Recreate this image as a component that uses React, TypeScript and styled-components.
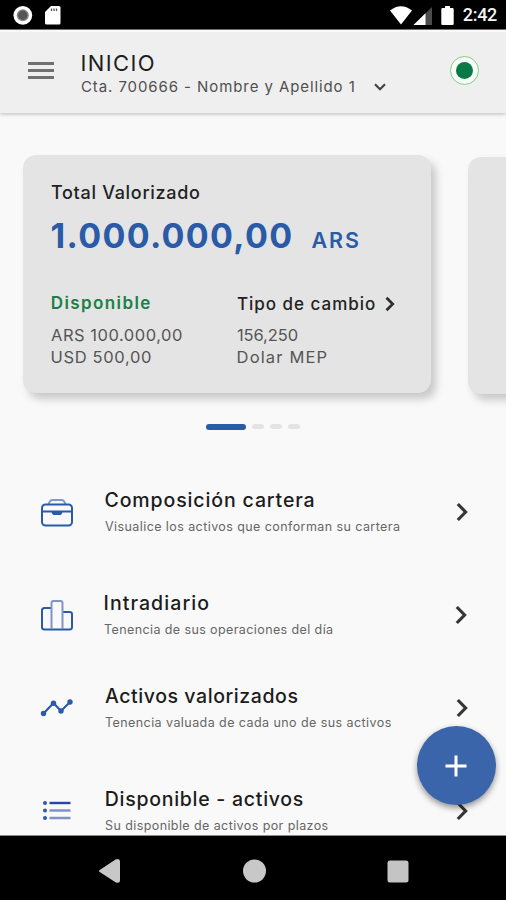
import React from "react";
import styled, { createGlobalStyle } from "styled-components";

const BLUE = "#2a5ba8";

const GlobalStyle = createGlobalStyle`
  *, *::before, *::after { box-sizing: border-box; }
  body { margin: 0; background: #fafafa; font-family: "Inter", sans-serif; }
  svg { display: block; flex: none; }
`;

const Screen = styled.div`
  position: relative;
  display: flex;
  flex-direction: column;
  width: 506px;
  height: 900px;
  overflow: hidden;
  background: #f9f9f9;
`;

const StatusBar = styled.header`
  flex: none;
  display: flex;
  align-items: center;
  justify-content: space-between;
  height: 30px;
  padding: 0 9px 0 13px;
  background: #000;
  border-bottom: 1px solid #777;
`;

const StatusGroup = styled.div<{ $gap: number }>`
  display: flex;
  align-items: center;
  gap: ${(p) => p.$gap}px;
  height: 100%;
`;

const Clock = styled.span`
  color: #f4f4f4;
  font: 500 18px/31px Roboto, sans-serif;
  letter-spacing: -0.3px;
`;

const AppBar = styled.div`
  z-index: 1;
  flex: none;
  display: flex;
  align-items: center;
  height: 83px;
  padding: 0 27px 4px 28px;
  background: #efefef;
  border-top: 2px solid #f8f8f8;
  box-shadow: 0 1px 4px rgba(0, 0, 0, 0.26);
`;

const MenuButton = styled.button`
  display: flex;
  flex-direction: column;
  gap: 4px;
  width: 26px;
  padding: 0;
  border: 0;
  background: none;
`;

const MenuLine = styled.span`
  height: 3px;
  background: #707070;
`;

const Heading = styled.div`
  flex: 1;
  margin-left: 27px;
  padding-top: 10px;
`;

interface TextProps {
  $spacing?: number;
  $shift?: number;
}

const Text = styled.div<TextProps>`
  margin-left: ${(p) => p.$shift ?? 0}px;
  letter-spacing: ${(p) => p.$spacing ?? 0}px;
  white-space: nowrap;
`;

const PageTitle = styled(Text)`
  color: #1f1f1f;
  font-size: 22px;
  line-height: 23px;
`;

const AccountRow = styled.div`
  display: flex;
  align-items: center;
  gap: 18px;
`;

const AccountName = styled(Text)`
  color: #505050;
  font-size: 15px;
  line-height: 24px;
`;

const StatusRing = styled.div`
  display: grid;
  place-items: center;
  width: 29px;
  height: 29px;
  border: 1.4px solid #7fce82;
  border-radius: 50%;
  background: #f8fbf8;

  &::before {
    content: "";
    width: 17px;
    height: 17px;
    border-radius: 50%;
    background: #077a45;
  }
`;

const Content = styled.main`
  flex: 1;
  min-height: 0;
  padding-top: 42px;
  overflow: hidden;
`;

const Carousel = styled.div`
  display: flex;
  gap: 37px;
  padding-left: 23px;
`;

const Card = styled.section<{ $next?: boolean }>`
  flex: none;
  width: 408px;
  height: ${(p) => (p.$next ? 237 : 238)}px;
  margin-top: ${(p) => (p.$next ? 2 : 0)}px;
  padding: 27px 28px 0;
  border-radius: 13px;
  background: #e4e4e4;
  box-shadow: 5px 6px 8px rgba(0, 0, 0, 0.2);
`;

const CardLabel = styled(Text)`
  color: #222;
  font-size: 18px;
  font-weight: 500;
  line-height: 22px;
`;

const AmountRow = styled.div`
  display: flex;
  align-items: baseline;
  gap: 18px;
  margin-top: 11px;
  color: ${BLUE};
`;

const Amount = styled(Text)`
  font-size: 34px;
  font-weight: 700;
  line-height: 42px;
`;

const Currency = styled(Text)`
  font-size: 21.5px;
  font-weight: 600;
`;

const CardColumns = styled.div`
  display: grid;
  grid-template-columns: 186px 1fr;
  margin-top: 34px;
`;

const ColumnTitle = styled(Text)<{ $green?: boolean }>`
  display: flex;
  align-items: center;
  gap: 9px;
  height: 24px;
  margin-top: ${(p) => (p.$green ? 0 : 1)}px;
  margin-bottom: ${(p) => (p.$green ? 9 : 8)}px;
  color: ${(p) => (p.$green ? "#1b8048" : "#222")};
  font-size: 17px;
  font-weight: ${(p) => (p.$green ? 600 : 500)};
`;

const Figure = styled(Text)`
  color: #555;
  font-size: 16.5px;
  line-height: 22px;
`;

const Pager = styled.div`
  display: flex;
  align-items: center;
  justify-content: center;
  gap: 6px;
  height: 7px;
  margin-top: 29px;
`;

const PagerDot = styled.span<{ $active?: boolean }>`
  width: ${(p) => (p.$active ? 40 : 12)}px;
  height: ${(p) => (p.$active ? 6 : 5)}px;
  border-radius: 3px;
  background: ${(p) => (p.$active ? BLUE : "#e4e4e4")};
`;

const MenuList = styled.nav`
  margin-top: 58px;
`;

const MenuItem = styled.a<{ $before: number; $inset: number }>`
  display: flex;
  height: 53px;
  margin-top: ${(p) => p.$before}px;
  padding: 0 ${(p) => 38.5 + p.$inset}px 0 40px;
`;

const IconSlot = styled.span`
  display: flex;
  align-items: center;
  width: 34px;
  height: 49px;
`;

const ItemText = styled.div<{ $inset: number }>`
  flex: 1;
  margin-left: ${(p) => 31 - p.$inset}px;
`;

const ItemTitle = styled(Text)`
  color: #1c1c1c;
  font-size: 19.5px;
  font-weight: 500;
  line-height: 24px;
`;

const ItemNote = styled(Text)`
  color: #666;
  font-size: 12.5px;
  line-height: 29px;
`;

const Fab = styled.button`
  position: absolute;
  right: 10.5px;
  bottom: 95px;
  display: grid;
  place-items: center;
  width: 79px;
  height: 79px;
  padding: 0 1px 0 0;
  border: 0;
  border-radius: 50%;
  background: #3b65aa;
  box-shadow: 0 3px 6px rgba(0, 0, 0, 0.42);
`;

const NavBar = styled.footer`
  flex: none;
  display: flex;
  align-items: center;
  justify-content: space-between;
  height: 65px;
  padding: 6px 97px 0 98px;
  border-top: 1px solid #8a8a8a;
  background: #000;
`;

const Chevron = () => (
  <svg width="12" height="49" viewBox="0 0 12 49" fill="none" stroke="#363636" strokeWidth="3.2">
    <path d="M1.800 16 9.600 24 1.800 32" />
  </svg>
);

const SmallChevron = () => (
  <svg width="10" height="16" viewBox="0 0 10 16" fill="none" stroke="#2d2d2d" strokeWidth="2.7">
    <path d="M1.500 1.800 7.700 8 1.500 14.200" />
  </svg>
);

const icons = {
  briefcase: (
    <svg width="34" height="30" viewBox="0 0 34 30" fill="none" stroke={BLUE} strokeWidth="2">
      <path d="M8.500 6.500C9.500 3 10.500 2 12.500 2h9c2 0 3 1 4 4.500" stroke="#7f97c9" />
      <rect x="2" y="6.500" width="30" height="21" rx="3.500" />
      <path d="M2 13.500h30" />
      <path d="M11.500 14c.7 2.500 1.500 3 3 3h5c1.500 0 2.300-.5 3-3z" fill={BLUE} stroke="none" />
    </svg>
  ),
  bars: (
    <svg width="34" height="32" viewBox="0 0 34 32" fill="none" strokeWidth="2">
      <path d="M11.500 9H4.500Q2 9 2 11.500V28q0 2.500 2.500 2.500h25q2.500 0 2.500-2.500V15q0-2-2.500-2h-7" stroke={BLUE} />
      <path d="M11.500 30V4q0-2 2-2h7q2 0 2 2v26" stroke="#8093c6" />
    </svg>
  ),
  trend: (
    <svg width="34" height="20" viewBox="0 0 34 20" fill={BLUE} stroke={BLUE}>
      <path d="M3.500 15.500 13.500 5l7.500 8L30 4" fill="none" strokeWidth="2.200" />
      <g stroke="none">
        <circle cx="3.500" cy="15.500" r="2.700" />
        <circle cx="13.500" cy="5.200" r="2.700" />
        <circle cx="21" cy="13" r="2.700" />
        <circle cx="30" cy="4" r="2.700" />
      </g>
    </svg>
  ),
  list: (
    <svg width="34" height="22" viewBox="0 0 34 22">
      <g fill={BLUE}>
        <circle cx="5" cy="3" r="2" />
        <circle cx="5" cy="10.500" r="2" />
        <circle cx="5" cy="18" r="2" />
      </g>
      <path d="M9.500 3h21" stroke="#2645a5" strokeWidth="2.400" />
      <path d="M9.500 10.500h21M9.500 18h21" stroke="#8093c6" strokeWidth="2.400" />
    </svg>
  ),
};

interface Entry {
  icon: keyof typeof icons;
  title: string;
  titleSpacing: number;
  titleShift: number;
  note: string;
  noteSpacing: number;
  before: number;
  inset: number;
}

const entries: Entry[] = [
  { icon: "briefcase", title: "Composición cartera", titleSpacing: 0.88, titleShift: -0.5, note: "Visualice los activos que conforman su cartera", noteSpacing: 0.42, before: 0, inset: 0 },
  { icon: "bars", title: "Intradiario", titleSpacing: 1.08, titleShift: -0.5, note: "Tenencia de sus operaciones del día", noteSpacing: 0.4, before: 49.5, inset: 1 },
  { icon: "trend", title: "Activos valorizados", titleSpacing: 0.57, titleShift: 0, note: "Tenencia valuada de cada uno de sus activos", noteSpacing: 0.43, before: 40, inset: 0 },
  { icon: "list", title: "Disponible - activos", titleSpacing: 0.73, titleShift: -0.3, note: "Su disponible de activos por plazos", noteSpacing: 0.41, before: 50, inset: 0 },
];

export default function App() {
  return (
    <>
      <GlobalStyle />
      <Screen>
        <StatusBar>
          <StatusGroup $gap={12}>
            <svg width="20" height="20" viewBox="0 0 20 20">
              <circle cx="9.800" cy="10.300" r="9.400" fill="#fff" />
              <circle cx="9.800" cy="10.300" r="6" fill="#8a8a8a" />
              <circle cx="9.800" cy="10.300" r="4.700" fill="#555" />
            </svg>
            <svg width="16" height="20" viewBox="0 0 16 20">
              <path d="M6 1h8q1.500 0 1.500 1.500V18q0 1.500-1.500 1.500H1.500Q0 19.500 0 18V7z" fill="#fff" />
              <path d="M6.500 3.500v2.500M9 3.500v2.500M11.500 3.500v2.500" stroke="#555" strokeWidth="1.300" />
            </svg>
          </StatusGroup>
          <StatusGroup $gap={8.5}>
            <svg width="43" height="20" viewBox="0 0 43 20">
              <path d="M0 5.500Q11 -3 22 5.500L11 19.500z" fill="#fff" />
              <path d="M42 2v18H23.500z" fill="#4c4c4c" />
              <path d="M35.500 8.300V20H23.500z" fill="#fff" />
            </svg>
            <svg width="13" height="20" viewBox="0 0 13 20">
              <path d="M4 1h5V3h2.500q1.200 0 1.200 1.200v14.600q0 1.200-1.200 1.200h-10Q.3 20 .3 18.800V4.200Q.3 3 1.500 3H4z" fill="#fff" />
            </svg>
            <Clock>2:42</Clock>
          </StatusGroup>
        </StatusBar>

        <AppBar>
          <MenuButton aria-label="Menú">
            <MenuLine />
            <MenuLine />
            <MenuLine />
          </MenuButton>
          <Heading>
            <PageTitle $spacing={1.4} $shift={-0.5}>INICIO</PageTitle>
            <AccountRow>
              <AccountName $spacing={0.91}>Cta. 700666 - Nombre y Apellido 1</AccountName>
              <svg width="12" height="8" viewBox="0 0 12 8" fill="none" stroke="#444" strokeWidth="2.200">
                <path d="M1 1.300 6 6.300 11 1.300" />
              </svg>
            </AccountRow>
          </Heading>
          <StatusRing />
        </AppBar>

        <Content>
          <Carousel>
            <Card>
              <CardLabel $spacing={0.7}>Total Valorizado</CardLabel>
              <AmountRow>
                <Amount $spacing={1.32} $shift={-0.5}>1.000.000,00</Amount>
                <Currency $spacing={1.9}>ARS</Currency>
              </AmountRow>
              <CardColumns>
                <div>
                  <ColumnTitle $green $spacing={1.4} $shift={-0.3}>Disponible</ColumnTitle>
                  <Figure $spacing={0.52}>ARS 100.000,00</Figure>
                  <Figure $spacing={0.65} $shift={-0.4}>USD 500,00</Figure>
                </div>
                <div>
                  <ColumnTitle $spacing={0.98}>
                    Tipo de cambio
                    <SmallChevron />
                  </ColumnTitle>
                  <Figure $spacing={-0.1}>156,250</Figure>
                  <Figure $spacing={1.15} $shift={-0.4}>Dolar MEP</Figure>
                </div>
              </CardColumns>
            </Card>
            <Card $next />
          </Carousel>

          <Pager>
            <PagerDot $active />
            <PagerDot />
            <PagerDot />
            <PagerDot />
          </Pager>

          <MenuList>
            {entries.map((e) => (
              <MenuItem key={e.title} $before={e.before} $inset={e.inset}>
                <IconSlot>{icons[e.icon]}</IconSlot>
                <ItemText $inset={e.inset}>
                  <ItemTitle $spacing={e.titleSpacing} $shift={e.titleShift}>{e.title}</ItemTitle>
                  <ItemNote $spacing={e.noteSpacing}>{e.note}</ItemNote>
                </ItemText>
                <Chevron />
              </MenuItem>
            ))}
          </MenuList>
        </Content>

        <Fab aria-label="Agregar">
          <svg width="22" height="22" viewBox="0 0 22 22" stroke="#fff" strokeWidth="3">
            <path d="M11 .5v21M.5 11h21" />
          </svg>
        </Fab>

        <NavBar>
          <svg width="24" height="26" viewBox="0 0 24 26">
            <path d="M2.500 11.500 17.500 1.500Q22 -.2 22 3.500v19q0 3.500-4.500 1.800L2.500 14.500Q-.5 13 2.500 11.500z" fill="#c8c8c8" />
          </svg>
          <svg width="24" height="24" viewBox="0 0 24 24">
            <circle cx="11.500" cy="12" r="11.500" fill="#c8c8c8" />
          </svg>
          <svg width="22" height="23" viewBox="0 0 22 23">
            <rect x="0.500" y="0.500" width="21" height="22" rx="2.500" fill="#c4c4c4" />
          </svg>
        </NavBar>
      </Screen>
    </>
  );
}
